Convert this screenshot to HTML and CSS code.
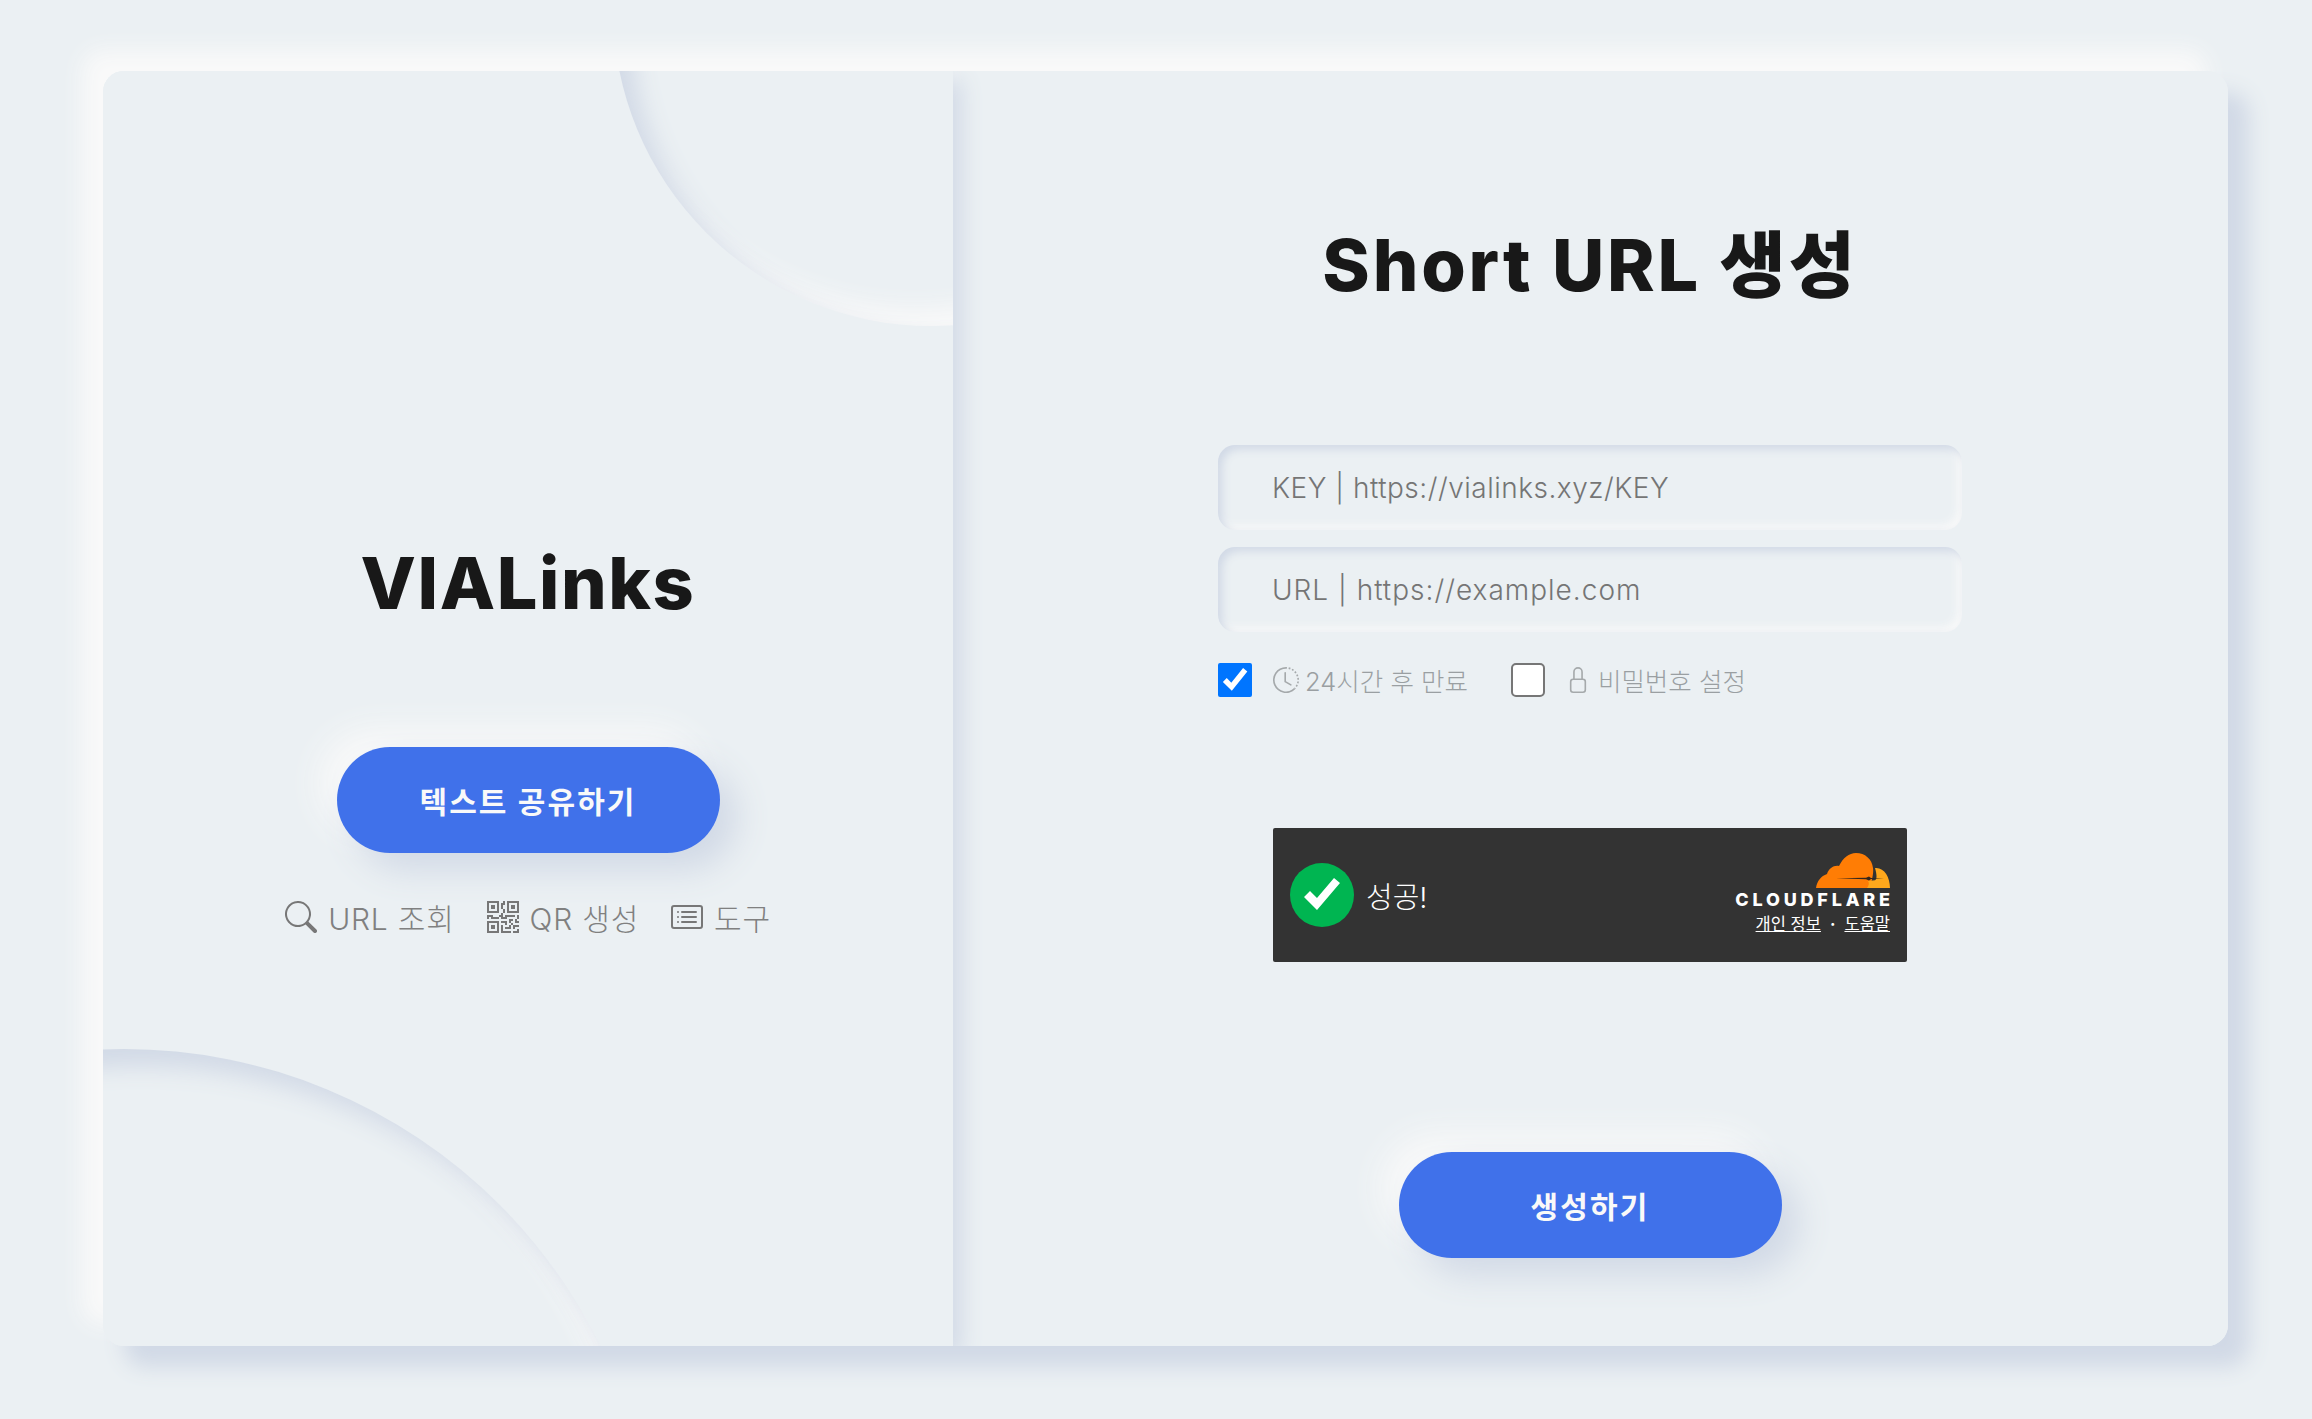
FILE: index.html
```html
<!DOCTYPE html>
<html lang="ko">
<head>
    <meta charset="UTF-8">
    <meta name="viewport" content="width=device-width, initial-scale=1.0">
    <title>VIALinks</title>
    <link rel="stylesheet" href="styles.css">
</head>
<body>
    <div class="shell">
    <main class="card">
        <section class="side">
            <div class="circle circle-bottom"></div>
            <div class="circle circle-top"></div>
            <h2 class="brand">VIALinks</h2>
            <button class="btn btn-share" type="button">텍스트 공유하기</button>
            <nav class="links">
                <a class="link link-url">
                    <svg class="icon" viewBox="0 0 16 16"><path d="M11.742 10.344a6.5 6.5 0 1 0-1.397 1.398h-.001c.03.04.062.078.098.115l3.85 3.85a1 1 0 0 0 1.415-1.414l-3.85-3.85a1.007 1.007 0 0 0-.115-.1zM12 6.5a5.5 5.5 0 1 1-11 0 5.5 5.5 0 0 1 11 0z"/></svg>
                    URL 조회
                </a>
                <a class="link">
                    <svg class="icon" viewBox="0 0 16 16"><path d="M2 2h2v2H2V2Z"/><path d="M6 0v6H0V0h6ZM5 1H1v4h4V1ZM4 12H2v2h2v-2Z"/><path d="M6 10v6H0v-6h6Zm-5 1v4h4v-4H1Zm11-9h2v2h-2V2Z"/><path d="M10 0v6h6V0h-6Zm5 1v4h-4V1h4ZM8 1V0h1v2H8v2H7V1h1Zm0 5V4h1v2H8ZM6 8V7h1V6h1v2h1V7h5v1h-4v1H7V8H6Zm0 0v1H2V8H1v1H0V7h3v1h3Zm10 1h-1V7h1v2Zm-1 0h-1v2h2v-1h-1V9Zm-4 0h2v1h-1v1h-1V9Zm2 3v-1h-1v1h-1v1H9v1h3v-2h1Zm0 0h3v1h-2v1h-1v-2Zm-4-1v1h1v-2H7v1h2Z"/><path d="M7 12h1v3h4v1H7v-4Zm9 2v2h-3v-1h2v-1h1Z"/></svg>
                    QR 생성
                </a>
                <a class="link">
                    <svg class="icon" viewBox="0 0 16 16"><path d="M14.5 3a.5.5 0 0 1 .5.5v9a.5.5 0 0 1-.5.5h-13a.5.5 0 0 1-.5-.5v-9a.5.5 0 0 1 .5-.5h13zm-13-1A1.5 1.5 0 0 0 0 3.5v9A1.5 1.5 0 0 0 1.5 14h13a1.5 1.5 0 0 0 1.5-1.5v-9A1.5 1.5 0 0 0 14.5 2h-13z"/><path d="M5 8a.5.5 0 0 1 .5-.5h7a.5.5 0 0 1 0 1h-7A.5.5 0 0 1 5 8zm0-2.5a.5.5 0 0 1 .5-.5h7a.5.5 0 0 1 0 1h-7a.5.5 0 0 1-.5-.5zm0 5a.5.5 0 0 1 .5-.5h7a.5.5 0 0 1 0 1h-7a.5.5 0 0 1-.5-.5zm-1-5a.5.5 0 1 1-1 0 .5.5 0 0 1 1 0zM4 8a.5.5 0 1 1-1 0 .5.5 0 0 1 1 0zm0 2.5a.5.5 0 1 1-1 0 .5.5 0 0 1 1 0z"/></svg>
                    도구
                </a>
            </nav>
        </section>

        <form class="panel">
            <h2 class="title">Short URL 생성</h2>
            <input class="field field-key" type="text" placeholder="KEY | https://vialinks.xyz/KEY">
            <input class="field field-url" type="text" placeholder="URL | https://example.com">
            <div class="options">
                <label class="option">
                    <input class="check" type="checkbox" checked>
                    <svg class="opt-icon" viewBox="0 0 16 16"><path d="M8.515 1.019A7 7 0 0 0 8 1V0a8 8 0 0 1 .589.022l-.074.997zm2.004.45a7.003 7.003 0 0 0-.985-.299l.219-.976c.383.086.76.2 1.126.342l-.36.933zm1.37.71a7.01 7.01 0 0 0-.439-.27l.493-.87a8.025 8.025 0 0 1 .979.654l-.615.789a6.996 6.996 0 0 0-.418-.302zm1.834 1.79a6.99 6.99 0 0 0-.653-.796l.724-.69c.27.285.52.59.747.91l-.818.576zm.744 1.352a7.08 7.08 0 0 0-.214-.468l.893-.45a7.976 7.976 0 0 1 .45 1.088l-.95.313a7.023 7.023 0 0 0-.179-.483zm.53 2.507a6.991 6.991 0 0 0-.1-1.025l.985-.17c.067.386.106.778.116 1.17l-1 .025zm-.131 1.538c.033-.17.06-.339.081-.51l.993.123a7.957 7.957 0 0 1-.23 1.155l-.964-.267c.046-.165.086-.332.12-.501zm-.952 2.379c.184-.29.346-.594.486-.908l.914.405c-.16.36-.345.706-.555 1.038l-.845-.535zm-.964 1.205c.122-.122.239-.248.35-.378l.758.653a8.073 8.073 0 0 1-.401.432l-.707-.707z"/><path d="M8 1a7 7 0 1 0 4.95 11.95l.707.707A8.001 8.001 0 1 1 8 0v1z"/><path d="M7.5 3a.5.5 0 0 1 .5.5v5.21l3.248 1.856a.5.5 0 0 1-.496.868l-3.5-2A.5.5 0 0 1 7 9V3.5a.5.5 0 0 1 .5-.5z"/></svg>
                    <span class="opt-text opt-expire">24시간 후 만료</span>
                </label>
                <label class="option">
                    <input class="check check-lock" type="checkbox">
                    <svg class="opt-icon" viewBox="0 0 16 16"><path d="M8 1a2 2 0 0 1 2 2v4H6V3a2 2 0 0 1 2-2zm3 6V3a3 3 0 0 0-6 0v4a2 2 0 0 0-2 2v5a2 2 0 0 0 2 2h6a2 2 0 0 0 2-2V9a2 2 0 0 0-2-2zM5 8h6a1 1 0 0 1 1 1v5a1 1 0 0 1-1 1H5a1 1 0 0 1-1-1V9a1 1 0 0 1 1-1z"/></svg>
                    <span class="opt-text opt-lock">비밀번호 설정</span>
                </label>
            </div>

            <div class="turnstile">
                <div class="ts-status">
                    <svg class="ts-ok" viewBox="0 0 64 64"><circle cx="32" cy="32" r="32" fill="#00b551"/><path d="M14 34l6-6 7 7 17-20 6 5-23 27z" fill="#fff"/></svg>
                    <span class="ts-text">성공!</span>
                </div>
                <div class="ts-brand">
                    <svg class="ts-cloud" viewBox="0 0 74 35">
                        <path d="M0 35C1 28 5 23 11 21 13 15 18 12 23 13 27 5 33 0 40 0 49 0 56 6 57 15 57.600 19 57 23 54 35Z" fill="#ff7d05"/>
                        <path d="M59 15C68 14 74 24 74 35H51C53 32 53.500 30 52 28L59 27.300C61 26 61 22 59 15Z" fill="#ffa81c"/>
                        <path d="M20 25.300L50 24.800 53 23.500 55 24.900 68 25.500 55 26.100 53 27.500 50 26.200Z" fill="#33261c"/>
                    </svg>
                    <div class="ts-logo">CLOUDFLARE</div>
                    <div class="ts-legal"><u>개인 정보</u><span class="ts-dot">·</span><u>도움말</u></div>
                </div>
            </div>

            <button class="btn btn-create" type="button">생성하기</button>
        </form>
    </main>
    </div>
</body>
</html>
```

FILE: styles.css
```css
* {
    box-sizing: border-box;
}
body {
    margin: 0;
    min-height: 1419px;
    padding: 71px 0 0 103px;
    background-color: #ebf0f3;
    font-family: Inter, "Noto Sans CJK KR", sans-serif;
    overflow: hidden;
}
.shell {
    width: 2125px;
    height: 1275px;
    border-radius: 21px;
    box-shadow: 21px 21px 21px #d1d9e6, -21px -21px 21px #f9f9f9;
}
.card {
    display: flex;
    height: 100%;
    overflow: hidden;
    border-radius: 21px;
    background-color: #ebf0f3;
}
.side {
    position: relative;
    z-index: 2;
    display: flex;
    flex-direction: column;
    align-items: center;
    width: 850px;
    padding-top: 469px;
    overflow: hidden;
    background-color: #ebf0f3;
    box-shadow: 8.5px 8.5px 21px #d1d9e6, -8.5px -8.5px 21px #f9f9f9;
}
.circle {
    position: absolute;
    border-radius: 50%;
    background-color: #ebf0f3;
    box-shadow: inset 17px 17px 25px #d1d9e6, inset -17px -17px 25px #f9f9f9;
}
.circle-top {
    top: -382px;
    left: 510px;
    width: 637px;
    height: 637px;
}
.circle-bottom {
    top: 978px;
    left: -510px;
    width: 1062px;
    height: 1062px;
}
.brand,
.title {
    position: relative;
    margin: 0;
    font-size: 72px;
    line-height: 86px;
    font-weight: 800;
    color: #181818;
}
.brand {
    letter-spacing: 1.6px;
}
.title {
    letter-spacing: 2.8px;
}
.btn {
    position: relative;
    display: block;
    width: 383px;
    height: 106px;
    border: 0;
    border-radius: 53px;
    background-color: #4071ea;
    box-shadow: 17px 17px 34px #d1d9e6, -17px -17px 34px #f9f9f9;
    color: #f9f9f9;
    font-family: inherit;
    font-size: 30px;
    font-weight: 700;
    letter-spacing: 2.1px;
}
.btn-share {
    margin-top: 121px;
}
.btn-create {
    margin: 190px auto 0;
}
.links {
    position: relative;
    display: flex;
    gap: 32px;
    margin-top: 44px;
}
.link {
    display: flex;
    align-items: center;
    gap: 11px;
    height: 40px;
    color: #808080;
    font-size: 30px;
    font-weight: 300;
    letter-spacing: .8px;
}
.icon {
    width: 32px;
    height: 32px;
    fill: #777;
}
.panel {
    flex: 1;
    display: flex;
    flex-direction: column;
    padding: 151px 266px 0 265px;
    text-align: center;
}
.field {
    display: block;
    width: 744px;
    height: 85px;
    padding: 0 0 0 54px;
    border: 0;
    outline: 0;
    border-radius: 17px;
    background-color: #ebf0f3;
    box-shadow: inset 4.25px 4.25px 8.5px #d1d9e6, inset -4.25px -4.25px 8.5px #f9f9f9;
    font-family: inherit;
    font-size: 28px;
    font-weight: 300;
}
.field::placeholder {
    color: #757575;
    opacity: 1;
}
.field-key {
    margin: 137px 0 17px;
    letter-spacing: .5px;
}
.field-url {
    letter-spacing: 1px;
}
.options {
    display: flex;
    gap: 43px;
    margin-top: 31px;
    height: 34px;
}
.option {
    display: flex;
    align-items: center;
}
.check {
    width: 34px;
    height: 34px;
    margin: 0 21px 0 0;
}
.check-lock {
    appearance: none;
    margin-right: 20px;
    border: 2px solid #767676;
    border-radius: 5px;
    background-color: #fff;
}
.opt-icon {
    width: 26px;
    height: 26px;
    fill: #a5a9ab;
}
.opt-text {
    margin-top: -2px;
    font-size: 25.500px;
    font-weight: 300;
    color: #9a9fa2;
}
.opt-expire {
    margin-left: 6px;
}
.opt-lock {
    margin-left: 7px;
}
.turnstile {
    display: flex;
    justify-content: space-between;
    width: 634px;
    height: 134px;
    margin: 131px auto 0;
    padding: 0 17px;
    border-radius: 2px;
    background-color: #333;
    color: #eee;
}
.ts-status {
    display: flex;
    align-items: center;
    gap: 12px;
}
.ts-ok {
    width: 64px;
    height: 64px;
}
.ts-text {
    font-size: 29px;
    font-weight: 300;
    color: #fff;
}
.ts-brand {
    display: flex;
    flex-direction: column;
    align-items: flex-end;
    padding-top: 25px;
}
.ts-cloud {
    width: 74px;
    height: 35px;
}
.ts-logo {
    margin-top: 1px;
    margin-right: -3.8px;
    font-size: 18px;
    line-height: 22px;
    font-weight: 800;
    letter-spacing: 3.8px;
    color: #fff;
}
.ts-legal {
    margin-top: 1px;
    font-size: 16.500px;
    line-height: 24px;
    font-weight: 400;
    color: #fff;
}
.ts-dot {
    margin: 0 9px;
    font-weight: 700;
}
```
